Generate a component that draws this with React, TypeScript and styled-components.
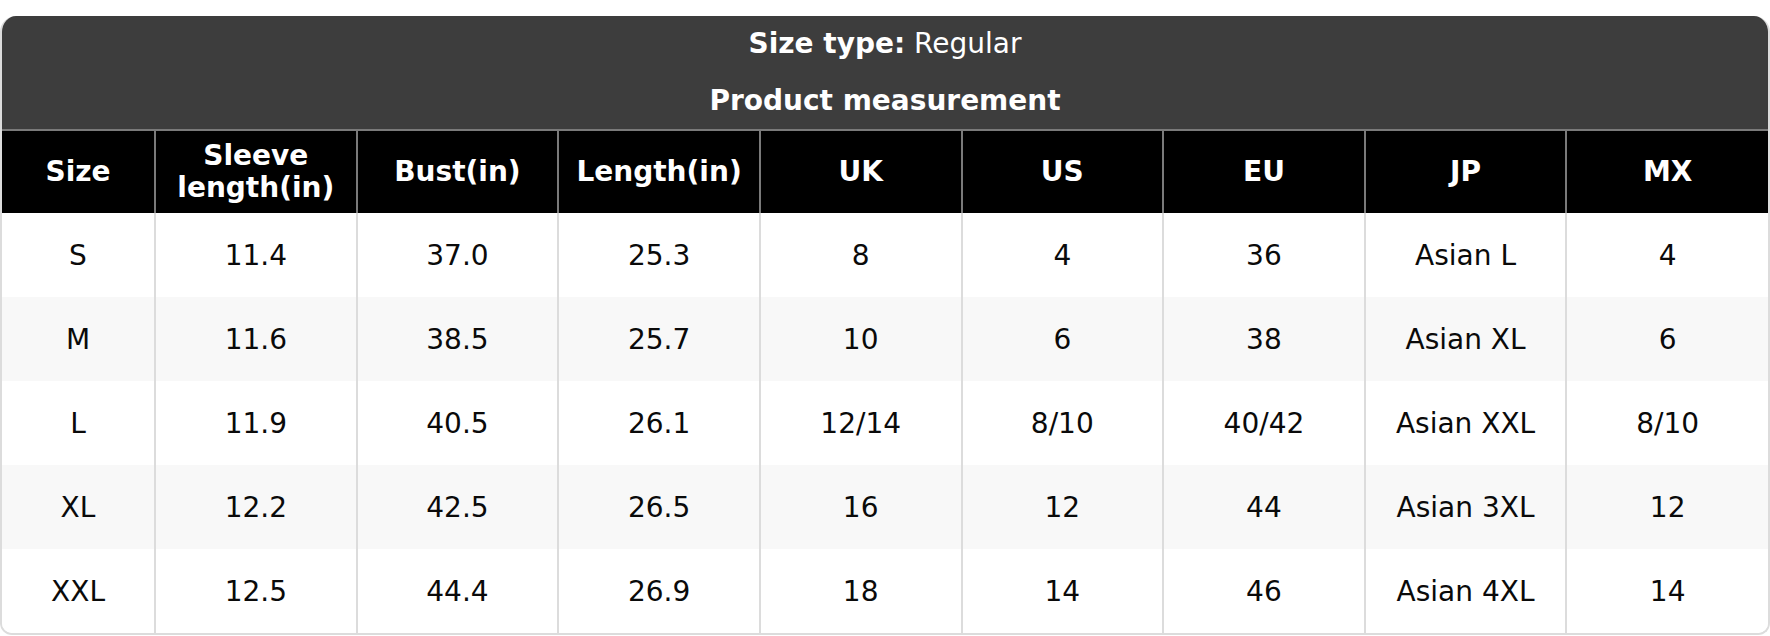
import React from "react";
import styled, { createGlobalStyle } from "styled-components";

const Global = createGlobalStyle`
  html, body { margin: 0; padding: 0; background: #ffffff; }
  body { font-family: "DejaVu Sans", "Liberation Sans", sans-serif; }
`;

const Page = styled.div`
  padding-top: 16px;
  width: 1770px;
`;

const Card = styled.div`
  border: 2px solid #dcdcdc;
  border-top: none;
  border-radius: 16px 16px 12px 12px;
  overflow: hidden;
  background: #fff;
`;

const Title = styled.div`
  background: #3d3d3d;
  color: #fff;
  text-align: center;
  padding: 11px 0 11px;
  font-size: 28px;
  line-height: 34px;
`;

const TitleLine = styled.div<{ $gap?: number }>`
  margin-top: ${(p) => p.$gap ?? 0}px;
  b { font-weight: 700; }
`;

const Table = styled.table`
  width: 100%;
  border-collapse: collapse;
  table-layout: fixed;
`;

const Th = styled.th`
  background: #000;
  color: #fff;
  font-weight: 700;
  font-size: 28px;
  line-height: 32px;
  height: 82px;
  padding: 0 4px;
  text-align: center;
  border: 2px solid #7a7a7a;
  border-bottom: none;
  &:first-child { border-left: none; }
  &:last-child { border-right: none; }
`;

const Tr = styled.tr<{ $alt: boolean }>`
  background: ${(p) => (p.$alt ? "#f8f8f8" : "#ffffff")};
`;

const Td = styled.td`
  font-size: 28px;
  color: #0a0a0a;
  height: 84px;
  padding: 0;
  text-align: center;
  border-left: 2px solid #dcdcdc;
  &:first-child { border-left: none; }
`;

const headers = ["Size", "Sleeve length(in)", "Bust(in)", "Length(in)", "UK", "US", "EU", "JP", "MX"];
const rows = [
  ["S", "11.4", "37.0", "25.3", "8", "4", "36", "Asian L", "4"],
  ["M", "11.6", "38.5", "25.7", "10", "6", "38", "Asian XL", "6"],
  ["L", "11.9", "40.5", "26.1", "12/14", "8/10", "40/42", "Asian XXL", "8/10"],
  ["XL", "12.2", "42.5", "26.5", "16", "12", "44", "Asian 3XL", "12"],
  ["XXL", "12.5", "44.4", "26.9", "18", "14", "46", "Asian 4XL", "14"],
];

export default function App() {
  return (
    <Page>
      <Global />
      <Card>
        <Title>
          <TitleLine>
            <b>Size type:</b> Regular
          </TitleLine>
          <TitleLine $gap={23}>
            <b>Product measurement</b>
          </TitleLine>
        </Title>
        <Table>
          <colgroup>
            <col style={{ width: 153 }} />
            {headers.slice(1).map((h) => (
              <col key={h} />
            ))}
          </colgroup>
          <thead>
            <tr>
              {headers.map((h) => (
                <Th key={h}>{h === "Sleeve length(in)" ? <>Sleeve<br />length(in)</> : h}</Th>
              ))}
            </tr>
          </thead>
          <tbody>
            {rows.map((r, i) => (
              <Tr key={r[0]} $alt={i % 2 === 1}>
                {r.map((c, j) => (
                  <Td key={j}>{c}</Td>
                ))}
              </Tr>
            ))}
          </tbody>
        </Table>
      </Card>
    </Page>
  );
}
